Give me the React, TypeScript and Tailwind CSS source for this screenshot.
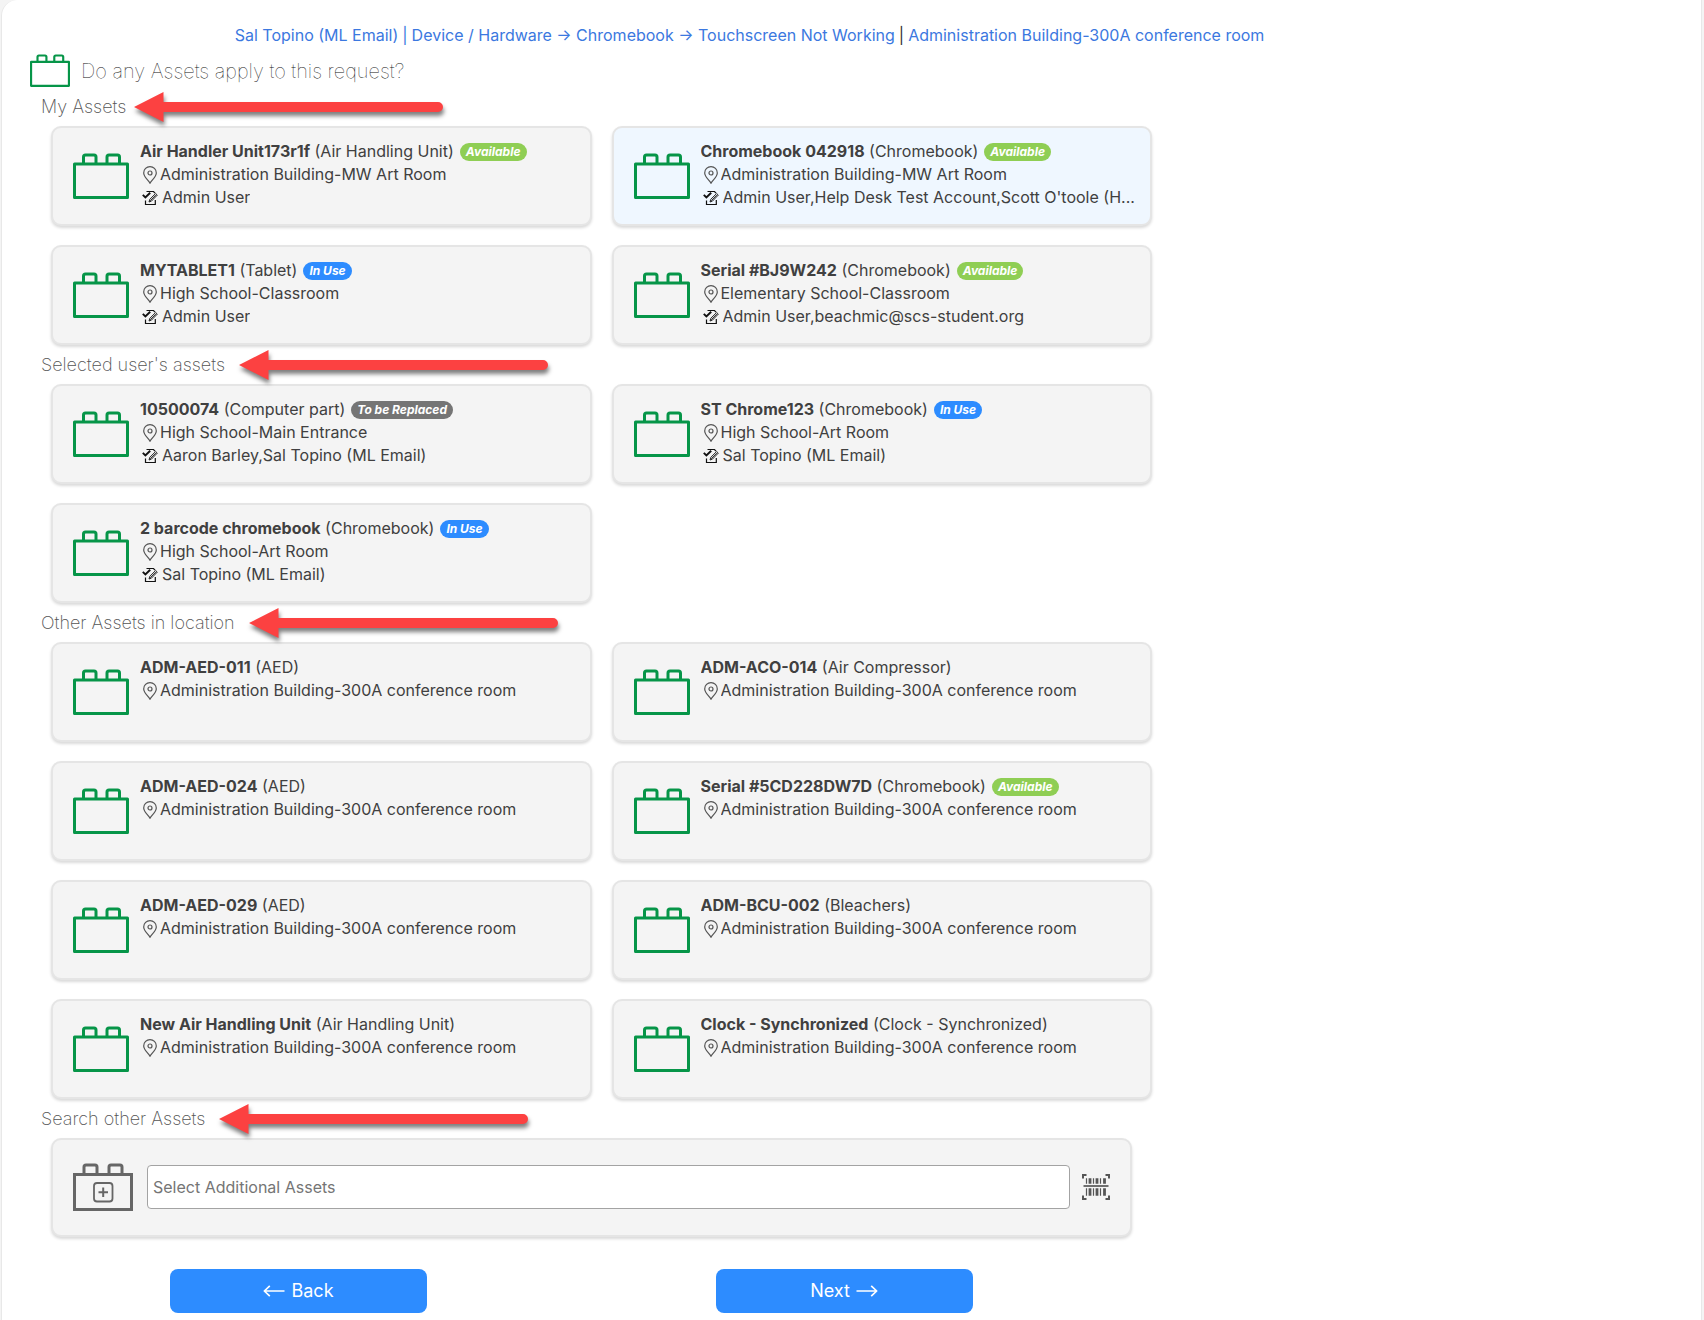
import React from 'react';

type Status = 'Available' | 'In Use' | 'To be Replaced';

interface Asset {
  name: string;
  type: string;
  location: string;
  users?: string;
  status?: Status;
  selected?: boolean;
}

interface Section {
  title: string;
  arrowClass: string;
  assets: Asset[];
}

const ROOM = 'Administration Building-300A conference room';

const sections: Section[] = [
  {
    title: 'My Assets',
    arrowClass: 'ml-2',
    assets: [
      { name: 'Air Handler Unit173r1f', type: 'Air Handling Unit', status: 'Available', location: 'Administration Building-MW Art Room', users: 'Admin User' },
      { name: 'Chromebook 042918', type: 'Chromebook', status: 'Available', location: 'Administration Building-MW Art Room', users: "Admin User,Help Desk Test Account,Scott O'toole (H...", selected: true },
      { name: 'MYTABLET1', type: 'Tablet', status: 'In Use', location: 'High School-Classroom', users: 'Admin User' },
      { name: 'Serial #BJ9W242', type: 'Chromebook', status: 'Available', location: 'Elementary School-Classroom', users: 'Admin User,beachmic@scs-student.org' },
    ],
  },
  {
    title: "Selected user's assets",
    arrowClass: 'ml-3.5',
    assets: [
      { name: '10500074', type: 'Computer part', status: 'To be Replaced', location: 'High School-Main Entrance', users: 'Aaron Barley,Sal Topino (ML Email)' },
      { name: 'ST Chrome123', type: 'Chromebook', status: 'In Use', location: 'High School-Art Room', users: 'Sal Topino (ML Email)' },
      { name: '2 barcode chromebook', type: 'Chromebook', status: 'In Use', location: 'High School-Art Room', users: 'Sal Topino (ML Email)' },
    ],
  },
  {
    title: 'Other Assets in location',
    arrowClass: 'ml-3.5',
    assets: [
      { name: 'ADM-AED-011', type: 'AED', location: ROOM },
      { name: 'ADM-ACO-014', type: 'Air Compressor', location: ROOM },
      { name: 'ADM-AED-024', type: 'AED', location: ROOM },
      { name: 'Serial #5CD228DW7D', type: 'Chromebook', status: 'Available', location: ROOM },
      { name: 'ADM-AED-029', type: 'AED', location: ROOM },
      { name: 'ADM-BCU-002', type: 'Bleachers', location: ROOM },
      { name: 'New Air Handling Unit', type: 'Air Handling Unit', location: ROOM },
      { name: 'Clock - Synchronized', type: 'Clock - Synchronized', location: ROOM },
    ],
  },
];

const badgeColors: Record<Status, string> = {
  Available: 'bg-[#8fce54]',
  'In Use': 'bg-[#2d8cff]',
  'To be Replaced': 'bg-[#757575]',
};

function BrickIcon({ className }: { className: string }) {
  return (
    <svg viewBox="0 0 56 46" className={className} fill="none" stroke="currentColor" strokeWidth="3" aria-hidden="true">
      <rect x="1.5" y="11" width="53" height="33.5" strokeLinejoin="round" />
      <path d="M10.5 11V4a2 2 0 0 1 2-2h8.500a2 2 0 0 1 2 2v7M34 11V4a2 2 0 0 1 2-2h8.500a2 2 0 0 1 2 2v7" />
    </svg>
  );
}

function BrickPlusIcon() {
  return (
    <svg viewBox="0 0 60 48" className="h-12 w-15 shrink-0 text-[#666]" fill="none" stroke="currentColor" aria-hidden="true">
      <g strokeWidth="3">
        <rect x="1.5" y="11.5" width="57" height="35" />
        <path d="M11 11V4a2 2 0 0 1 2-2h9a2 2 0 0 1 2 2v7M36 11V4a2 2 0 0 1 2-2h9a2 2 0 0 1 2 2v7" />
      </g>
      <rect x="21" y="20" width="18.5" height="18.5" rx="3" strokeWidth="1.8" />
      <path d="M30.2 24.5v9.5M25.5 29.2H35" strokeWidth="2" />
    </svg>
  );
}

function PinIcon() {
  return (
    <svg viewBox="0 0 14 18" className="h-[18px] w-3.5 shrink-0" fill="none" stroke="#555" strokeWidth="1.2" aria-hidden="true">
      <path d="M7 17.2C5.4 14.4.7 10.8.7 6.9a6.3 6.3 0 0 1 12.600 0C13.300 10.800 8.600 14.400 7 17.200Z" />
      <circle cx="7" cy="7" r="2" />
    </svg>
  );
}

function AssignedIcon() {
  return (
    <svg viewBox="0 0 16 16" className="size-4 shrink-0" fill="none" stroke="#111" strokeWidth="1.2" aria-hidden="true">
      <path d="M4.5 1.5h7l1.5 1.7M3.5 10.5v4h9.800V10" />
      <path d="M.8 4.800l2.600 2.700L8.200 2.800" strokeWidth="1.9" />
      <path d="M7 12l.8-2.700L13.600 3.500l1.700 1.600-5.800 6L7 12ZM8.200 10.800l5.600-5.700" strokeWidth="0.9" />
    </svg>
  );
}

function BarcodeIcon() {
  return (
    <svg viewBox="0 0 28 26" className="h-[26px] w-7" fill="none" stroke="#555" aria-hidden="true">
      <path d="M1 4.5V1h3.500M23.500 1H27v3.500M1 21.500V25h3.500M23.500 25H27v-3.500" strokeWidth="2" />
      <path d="M1.5 12h25" strokeWidth="1.7" />
      <path d="M4.500 4.200v5.600M11.500 4.200v5.600M18.500 4.200v5.600M4.500 14.200v7.500M11.500 14.200v7.500M18.500 14.200v7.500" strokeWidth="1.2" />
      <path d="M8 4.200v5.600M15 4.200v5.600M22.500 4.200v5.600M8 14.200v7.500M15 14.200v7.500M22.500 14.200v7.500" strokeWidth="2.8" />
    </svg>
  );
}

function LongArrow({ className }: { className?: string }) {
  return (
    <svg viewBox="0 0 22 12" className={`h-3 w-[22px] ${className ?? ''}`} fill="none" stroke="currentColor" strokeWidth="1.7" aria-hidden="true">
      <path d="M.5 6h20M15.2.8L20.700 6l-5.500 5.200" strokeLinejoin="round" />
    </svg>
  );
}

function RedArrow({ className }: { className: string }) {
  return (
    <svg viewBox="0 0 309 30" className={`h-[30px] w-[309px] shrink-0 overflow-visible drop-shadow-[1px_4px_2px_rgba(0,0,0,0.5)] ${className}`} fill="#fc4141" aria-hidden="true">
      <path d="M0 15L29.500 0v10H304a5 5 0 0 1 0 10H29.500v10Z" />
    </svg>
  );
}

function SectionHeading({ title, arrowClass }: { title: string; arrowClass: string }) {
  return (
    <div className="flex h-[39px] items-center">
      <h2 className="text-lg font-extralight whitespace-nowrap text-[#555]">{title}</h2>
      <RedArrow className={arrowClass} />
    </div>
  );
}

function AssetCard({ asset }: { asset: Asset }) {
  return (
    <button
      type="button"
      className={`flex h-[100px] min-w-0 items-start rounded-[10px] border-2 border-[#e5e5e5] pt-3 pr-3 pl-5 text-left shadow-[0_2px_3px_rgba(0,0,0,0.15)] ${asset.selected ? 'bg-[#eff7ff]' : 'bg-[#f4f4f4]'}`}
    >
      <BrickIcon className="mt-[13px] h-[46px] w-14 shrink-0 text-[#069548]" />
      <span className="ml-[11px] block min-w-0 flex-1 leading-[23px]">
        <span className="flex items-center">
          <span className="truncate">
            <b className="font-bold">{asset.name}</b> ({asset.type})
          </span>
          {asset.status && (
            <span className={`ml-1.5 shrink-0 rounded-full px-1.5 text-xs leading-[18px] font-bold text-white italic ${badgeColors[asset.status]}`}>
              {asset.status}
            </span>
          )}
        </span>
        <span className="flex items-center gap-[3px] pl-[3px]">
          <PinIcon />
          <span className="truncate">{asset.location}</span>
        </span>
        {asset.users && (
          <span className="flex items-center gap-1 pl-0.5">
            <AssignedIcon />
            <span className="truncate">{asset.users}</span>
          </span>
        )}
      </span>
    </button>
  );
}

export default function App() {
  return (
    <div className="min-h-screen bg-[#f4f4f4] pr-0.5 pl-px font-['Inter',sans-serif] text-base text-[#404040]">
      <main className="min-h-screen rounded-tl-2xl border-x border-[#e8e8e8] bg-white pb-2">
        <nav className="flex w-[88%] justify-center gap-1 pt-[23px] leading-6 whitespace-nowrap text-[#3b78e0]">
          <a href="#user">Sal Topino (ML Email)</a>
          <span>|</span>
          <a href="#issue">Device / Hardware → Chromebook → Touchscreen Not Working</a>
          <span className="text-[#333]">|</span>
          <a href="#room">{ROOM}</a>
        </nav>

        <header className="flex h-10 items-center gap-[11px] pt-[7px] pl-7">
          <BrickIcon className="h-[33px] w-10 text-[#069548]" />
          <h1 className="text-xl font-thin text-[#111]">Do any Assets apply to this request?</h1>
        </header>

        <div className="w-full max-w-[1150px] pl-[39px]">
          {sections.map((section) => (
            <section key={section.title}>
              <SectionHeading title={section.title} arrowClass={section.arrowClass} />
              <div className="ml-2.5 grid grid-cols-2 gap-x-5 gap-y-[19px]">
                {section.assets.map((asset) => (
                  <AssetCard key={asset.name} asset={asset} />
                ))}
              </div>
            </section>
          ))}

          <section>
            <SectionHeading title="Search other Assets" arrowClass="ml-3.5" />
            <div className="mr-5 ml-2.5 flex h-[99px] items-center rounded-[10px] border-2 border-[#e5e5e5] bg-[#f4f4f4] px-5 pb-0.5 shadow-[0_2px_3px_rgba(0,0,0,0.15)]">
              <BrickPlusIcon />
              <input
                type="text"
                aria-label="Select Additional Assets"
                placeholder="Select Additional Assets"
                className="mr-3 ml-3.5 h-11 min-w-0 flex-1 rounded border border-[#a3a3a3] bg-white px-[5px] placeholder:text-[#757575]"
              />
              <button type="button" aria-label="Scan barcode">
                <BarcodeIcon />
              </button>
            </div>
          </section>

          <div className="mt-8 grid grid-cols-2 text-lg text-white">
            <button type="button" className="ml-[129px] flex h-11 w-[257px] items-center justify-center gap-1.5 rounded-lg bg-[#2d8cff]">
              <LongArrow className="rotate-180" />
              Back
            </button>
            <button type="button" className="ml-[119px] flex h-11 w-[257px] items-center justify-center gap-1.5 rounded-lg bg-[#2d8cff]">
              Next
              <LongArrow />
            </button>
          </div>
        </div>
      </main>
    </div>
  );
}
